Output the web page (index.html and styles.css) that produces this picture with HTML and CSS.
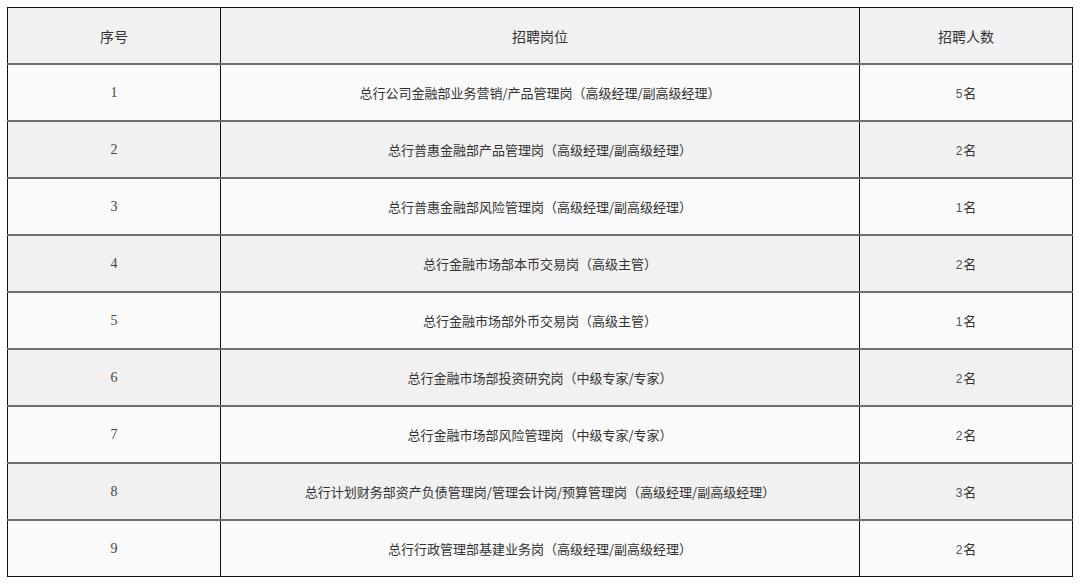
FILE: index.html
```html
<!DOCTYPE html>
<html lang="zh-CN">
<head>
<meta charset="utf-8">
<title>招聘岗位</title>
<link rel="stylesheet" href="styles.css">
</head>
<body>
<table class="jobs">
  <colgroup>
    <col class="c-no">
    <col class="c-pos">
    <col class="c-num">
  </colgroup>
  <thead>
    <tr><th>序号</th><th>招聘岗位</th><th>招聘人数</th></tr>
  </thead>
  <tbody>
    <tr><td class="no">1</td><td>总行公司金融部业务营销/产品管理岗（高级经理/副高级经理）</td><td><span class="n">5</span>名</td></tr>
    <tr><td class="no">2</td><td>总行普惠金融部产品管理岗（高级经理/副高级经理）</td><td><span class="n">2</span>名</td></tr>
    <tr><td class="no">3</td><td>总行普惠金融部风险管理岗（高级经理/副高级经理）</td><td><span class="n">1</span>名</td></tr>
    <tr><td class="no">4</td><td>总行金融市场部本币交易岗（高级主管）</td><td><span class="n">2</span>名</td></tr>
    <tr><td class="no">5</td><td>总行金融市场部外币交易岗（高级主管）</td><td><span class="n">1</span>名</td></tr>
    <tr><td class="no">6</td><td>总行金融市场部投资研究岗（中级专家/专家）</td><td><span class="n">2</span>名</td></tr>
    <tr><td class="no">7</td><td>总行金融市场部风险管理岗（中级专家/专家）</td><td><span class="n">2</span>名</td></tr>
    <tr><td class="no">8</td><td>总行计划财务部资产负债管理岗/管理会计岗/预算管理岗（高级经理/副高级经理）</td><td><span class="n">3</span>名</td></tr>
    <tr><td class="no">9</td><td>总行行政管理部基建业务岗（高级经理/副高级经理）</td><td><span class="n">2</span>名</td></tr>
  </tbody>
</table>
</body>
</html>
```
FILE: styles.css
```css
html, body {
  margin: 0;
  padding: 0;
  background: #ffffff;
}
body {
  padding: 7px;
  font-family: "Noto Sans CJK SC", "Noto Sans", sans-serif;
  color: #333333;
}
.jobs {
  width: 1066px;
  border-collapse: collapse;
  table-layout: fixed;
  border: 1px solid #111111;
}
.c-no { width: 213px; }
.c-num { width: 213px; }
.jobs th,
.jobs td {
  height: 55px;
  padding: 0;
  text-align: center;
  vertical-align: middle;
  border-left: 1px solid #111111;
  border-right: 1px solid #111111;
  border-bottom: 2px solid #6e6e6e;
  font-size: 13px;
  font-weight: normal;
  white-space: nowrap;
}
.jobs th {
  font-size: 14px;
  background: #f1f1f1;
  color: #333333;
}
.jobs tbody tr:nth-child(odd) td { background: #fafafa; }
.jobs tbody tr:nth-child(even) td { background: #f1f1f1; }
.jobs tbody tr:last-child td { border-bottom: 1px solid #111111; }
.jobs td.no {
  font-family: "Liberation Serif", "DejaVu Serif", serif;
  font-size: 14px;
  color: #444444;
}
.n {
  font-family: "Liberation Sans", sans-serif;
  font-size: 12px;
  color: #555555;
  margin-right: 1px;
}
```
